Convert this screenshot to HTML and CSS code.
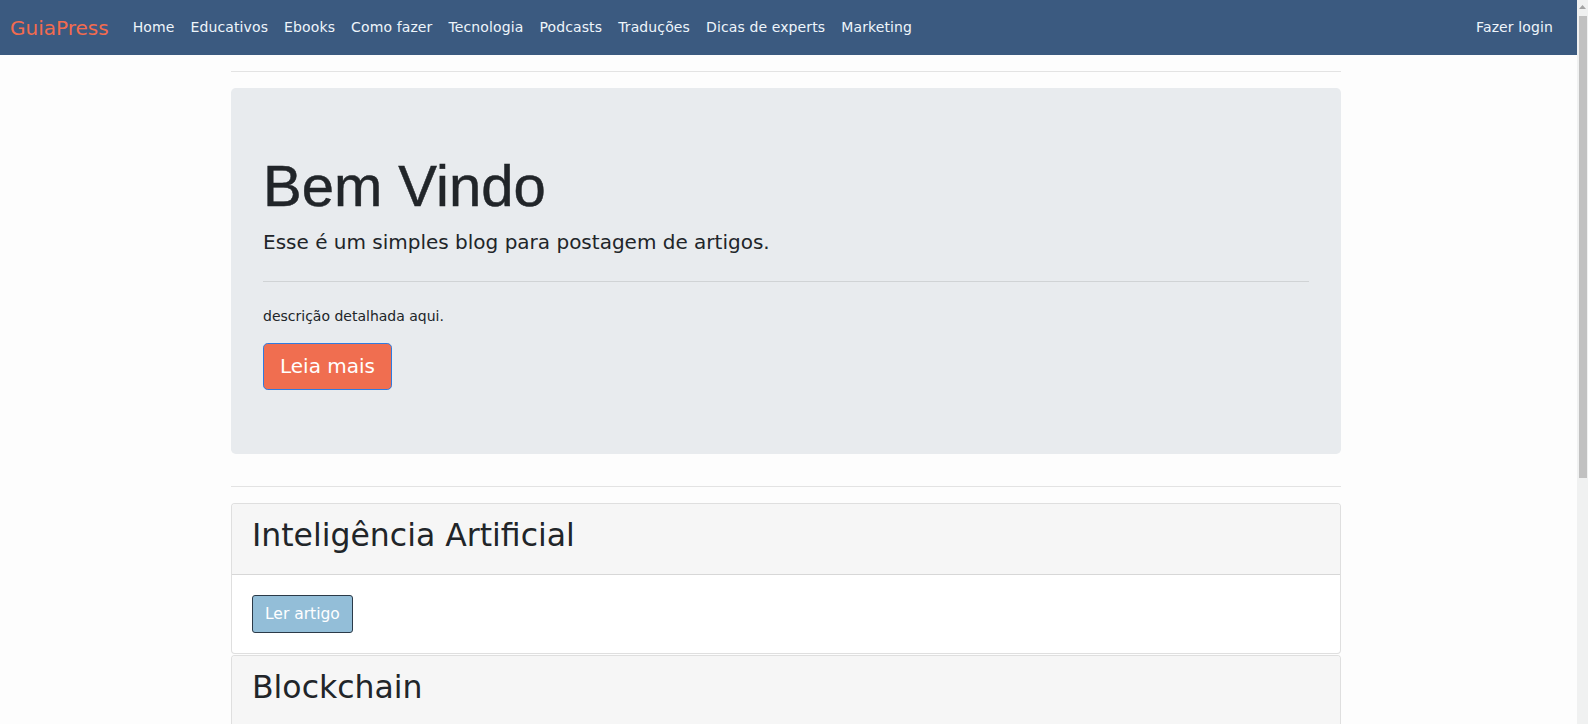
FILE: index.html
```html
<!DOCTYPE html>
<html lang="pt-BR">
<head>
<meta charset="utf-8">
<title>GuiaPress</title>
<link rel="stylesheet" href="styles.css">
</head>
<body>
<nav class="navbar">
  <a class="brand" href="#">GuiaPress</a>
  <ul class="nav-links">
    <li><a href="#">Home</a></li>
    <li><a href="#">Educativos</a></li>
    <li><a href="#">Ebooks</a></li>
    <li><a href="#">Como fazer</a></li>
    <li><a href="#">Tecnologia</a></li>
    <li><a href="#">Podcasts</a></li>
    <li><a href="#">Traduções</a></li>
    <li><a href="#">Dicas de experts</a></li>
    <li><a href="#">Marketing</a></li>
  </ul>
  <ul class="nav-right">
    <li><a href="#">Fazer login</a></li>
  </ul>
</nav>

<div class="page">
<main class="container">
  <hr class="sep">
  <section class="jumbotron">
    <h1 class="display">Bem Vindo</h1>
    <p class="lead">Esse é um simples blog para postagem de artigos.</p>
    <hr class="jumbo-hr">
    <p class="desc">descrição detalhada aqui.</p>
    <a class="btn-lg" href="#">Leia mais</a>
  </section>
  <hr class="sep">

  <article class="card">
    <div class="card-header"><h2>Inteligência Artificial</h2></div>
    <div class="card-body"><a class="btn-read" href="#">Ler artigo</a></div>
  </article>
  <article class="card">
    <div class="card-header"><h2>Blockchain</h2></div>
    <div class="card-body"><a class="btn-read" href="#">Ler artigo</a></div>
  </article>
  <article class="card">
    <div class="card-header"><h2>Computação Quântica</h2></div>
    <div class="card-body"><a class="btn-read" href="#">Ler artigo</a></div>
  </article>
</main>
</div>

<div class="scrollbar" aria-hidden="true">
  <svg class="sb-arrow" width="11" height="15" viewBox="0 0 11 15"><path d="M2 9 L5.5 5 L9 9 Z" fill="#a3a3a3"/></svg>
  <div class="sb-thumb"></div>
</div>
</body>
</html>
```

FILE: styles.css
```css
* { box-sizing: border-box; }

html, body { overflow-x: hidden; }
html::-webkit-scrollbar { width: 0; height: 0; }

body {
  margin: 0 11px 0 0;
  background: #fdfdfd;
  color: #212529;
  font-family: "DejaVu Sans", "Open Sans", sans-serif;
  font-size: 14px;
  line-height: 1.5;
}

a { text-decoration: none; }
ul { list-style: none; margin: 0; padding: 0; }

/* simulated window scrollbar, overlaying the right edge */
.scrollbar {
  position: fixed;
  top: 0;
  right: 0;
  width: 11px;
  height: 100vh;
  background: #f0f1f1;
  display: flex;
  flex-direction: column;
  align-items: center;
}
.sb-arrow { display: block; flex: none; }
.sb-thumb {
  width: 8px;
  height: 462px;
  margin-top: 1px;
  background: #c1c1c1;
}

.navbar {
  display: flex;
  align-items: center;
  height: 55px;
  padding: 0 16px 0 10px;
  background: #3b5a80;
}

.brand {
  color: #f26b4f;
  font-size: 20px;
  margin-right: 16px;
  line-height: 30px;
}

.nav-links, .nav-right {
  display: flex;
  align-items: center;
}

.nav-right { margin-left: auto; }

.nav-links a, .nav-right a {
  display: block;
  padding: 8px;
  color: #eef5fb;
  font-size: 14px;
  letter-spacing: 0.12px;
}

.page { padding-right: 5px; }

.container {
  max-width: 1140px;
  margin: 0 auto;
  padding: 0 15px;
}

.sep {
  margin: 16px 0;
  border: 0;
  border-top: 1px solid rgba(0,0,0,0.1);
}

.jumbotron {
  background: #e8ebee;
  border-radius: 4.8px;
  padding: 64px 32px;
  margin-bottom: 32px;
}

.display {
  margin: 0 0 8px;
  font-family: "Liberation Sans", Arial, sans-serif;
  font-weight: 400;
  font-size: 58px;
  line-height: 1.16;
  color: #212529;
  -webkit-text-stroke: 0.5px #212529;
}

.lead {
  margin: 0;
  font-size: 20px;
  font-weight: 400;
  line-height: 1.5;
}

.jumbo-hr {
  margin: 24px 0;
  border: 0;
  border-top: 1px solid rgba(0,0,0,0.1);
}

.desc {
  margin: 0 0 16px;
  font-size: 14px;
}

.btn-lg {
  display: inline-block;
  padding: 7px 16px;
  background: #f06e50;
  border: 1px solid #2f7be0;
  border-radius: 4.8px;
  color: #fff;
  font-size: 20px;
  line-height: 31px;
}

.card {
  background: #fff;
  border: 1px solid rgba(0,0,0,0.125);
  border-radius: 4px;
  margin-bottom: 1px;
}

.card-header {
  background: #f6f6f6;
  padding: 12px 20px;
  border-bottom: 1px solid rgba(0,0,0,0.125);
  border-radius: 3px 3px 0 0;
}

.card-header h2 {
  margin: 0 0 8px;
  font-size: 31.5px;
  font-weight: 400;
  line-height: 38px;
}

.card-body { padding: 20px; }

.btn-read {
  display: inline-block;
  padding: 0 12px;
  height: 38px;
  line-height: 36px;
  background: #93bed8;
  border: 1px solid #2b3a48;
  border-radius: 3px;
  color: #fff;
  font-size: 15.5px;
}
```
